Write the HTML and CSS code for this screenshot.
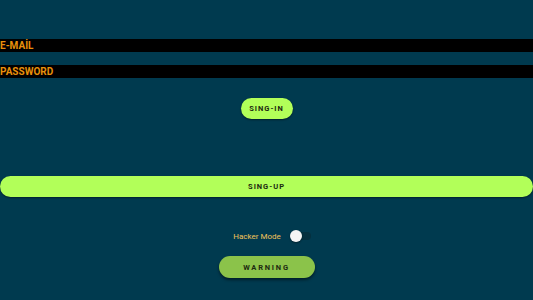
FILE: index.html
```html
<!DOCTYPE html>
<html lang="en">
<head>
    <meta charset="UTF-8">
    <meta name="viewport" content="width=device-width, initial-scale=1.0">
    <title>Sign in</title>
    <link rel="stylesheet" href="styles.css">
</head>
<body>
    <!-- Login form -->
    <div class="fields">
        <div class="field">E-MAİL</div>
        <div class="field">PASSWORD</div>
    </div>

    <div class="center">
        <button class="btn btn-small">SING-IN</button>
    </div>

    <button class="btn btn-wide">SING-UP</button>

    <div class="hacker">
        <span>Hacker Mode</span>
        <span class="switch"><span class="thumb"></span></span>
    </div>

    <div class="center">
        <button class="btn btn-warning">WARNING</button>
    </div>
</body>
</html>
```

FILE: styles.css
```css
body {
    margin: 0;
    background: #003a4f;
    font-family: Roboto, Arial, sans-serif;
    height: 300px;
    overflow: hidden;
}
.fields {
    padding-top: 39px;
    display: flex;
    flex-direction: column;
    gap: 13px;
}
.field {
    background: #000;
    color: #e8900a;
    font-weight: bold;
    font-size: 10px;
    height: 13px;
    line-height: 13px;
}
.center {
    display: flex;
    justify-content: center;
}
.btn {
    border: none;
    font-family: Roboto, Arial, sans-serif;
    font-weight: bold;
    font-size: 7.5px;
    letter-spacing: 1px;
    color: #1d2a10;
    padding: 0;
    box-shadow: 0 1px 2px rgba(0, 0, 0, 0.45);
}
.btn-small {
    margin-top: 20px;
    width: 52px;
    height: 21px;
    border-radius: 11px;
    background: #b2ff59;
}
.btn-wide {
    display: block;
    margin-top: 57px;
    width: 533px;
    height: 21px;
    border-radius: 11px;
    background: #b2ff59;
}
.hacker {
    margin-top: 32px;
    display: flex;
    justify-content: center;
    align-items: center;
    gap: 12px;
    color: #f2c25a;
    font-size: 8px;
    height: 14px;
    padding-left: 11px;
}
.switch {
    position: relative;
    width: 18px;
    height: 8px;
    border-radius: 4px;
    background: #04303f;
}
.thumb {
    position: absolute;
    left: -3px;
    top: -2px;
    width: 12px;
    height: 12px;
    border-radius: 50%;
    background: #f4f4f4;
    box-shadow: 0 1px 2px rgba(0, 0, 0, 0.4);
}
.btn-warning {
    margin-top: 13px;
    width: 96px;
    height: 22px;
    border-radius: 11px;
    background: #8bc34a;
    letter-spacing: 1.8px;
    box-shadow: 0 2px 3px rgba(0, 0, 0, 0.5);
}
```
